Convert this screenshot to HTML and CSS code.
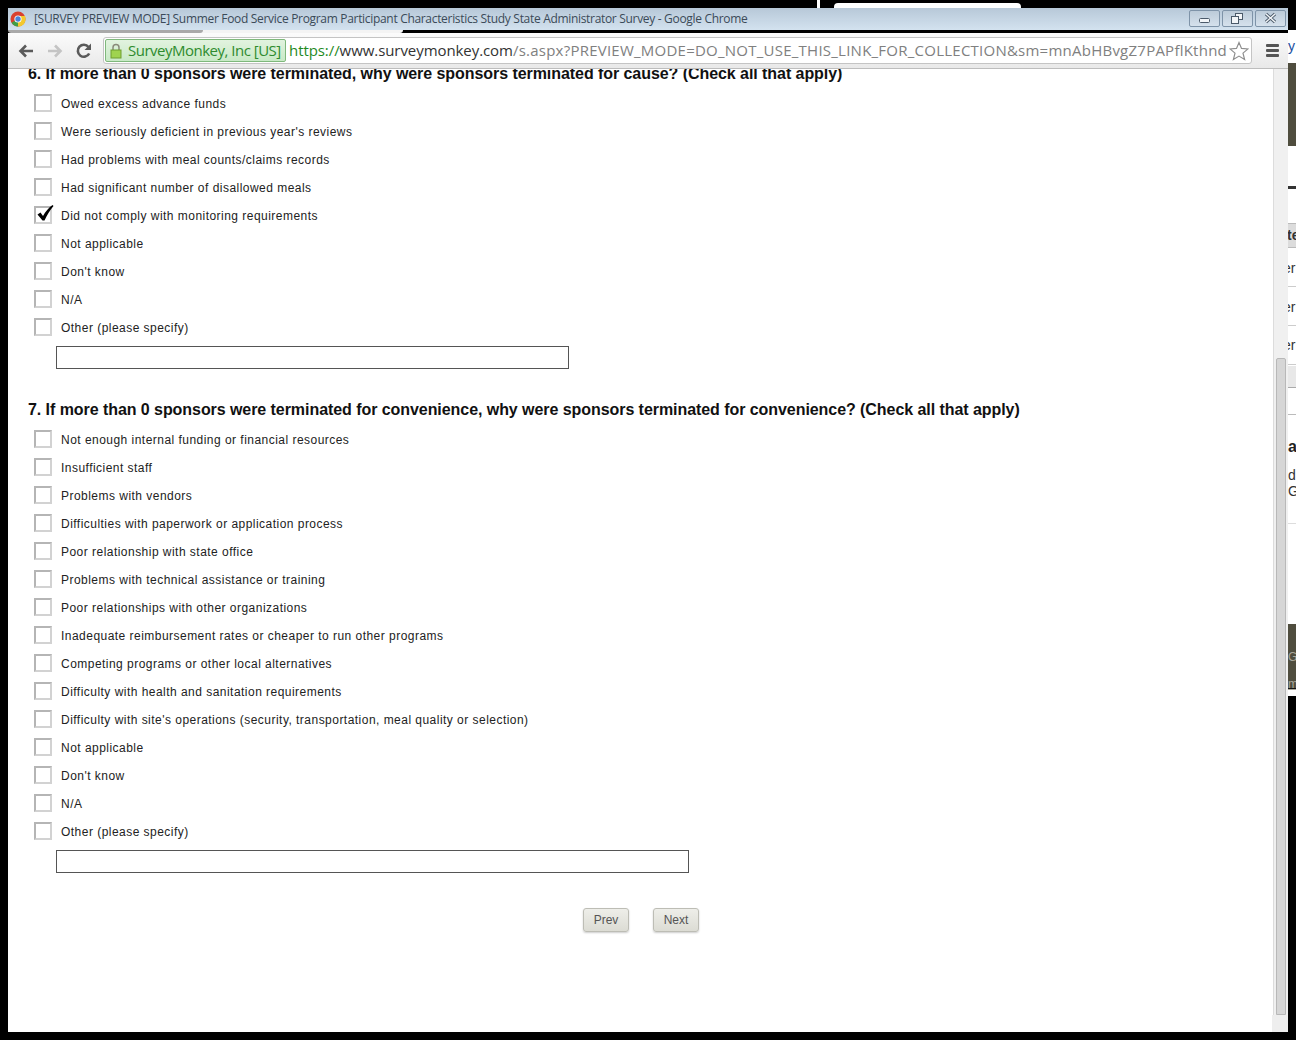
FILE: index.html
```html
<!DOCTYPE html>
<html lang="en">
<head>
<meta charset="utf-8">
<title>Survey preview</title>
<link rel="stylesheet" href="styles.css">
</head>
<body>
<div class="desktop">
  <div class="bg-tab"></div>
  <div class="bg-line"></div>
  <div class="sliver">
    <div class="s-top">y</div>
    <div class="s-dark s-dark-a"></div>
    <div class="s-rule-thick"></div>
    <div class="s-head">te</div>
    <div class="s-row s-r1">er</div>
    <div class="s-row s-r2">er</div>
    <div class="s-row s-r3">er</div>
    <div class="s-grey"></div>
    <div class="s-blank"></div>
    <div class="s-text"><b>a</b><span>d</span><span>G</span></div>
    <div class="s-dark s-dark-b"><span>G</span><u>m</u></div>
  </div>
  <div class="window">
    <div class="titlebar">
      <svg class="chrome-logo" viewBox="0 0 16 16" width="16" height="16"><circle cx="8" cy="8" r="7.5" fill="#d9412f"/><path d="M8 8 1.500 11.800A7.500 7.500 0 0 0 8 15.500L11 9z" fill="#3f9e46"/><path d="M8 8v7.500A7.500 7.500 0 0 0 15 5H8z" fill="#f3c92f"/><circle cx="8" cy="8" r="3.600" fill="#fff"/><circle cx="8" cy="8" r="2.700" fill="#4a82d8"/></svg>
      <span class="title">[SURVEY PREVIEW MODE] Summer Food Service Program Participant Characteristics Study State Administrator Survey - Google Chrome</span>
      <div class="winbtns">
        <div class="winbtn"><svg viewBox="0 0 31 17" width="31" height="17"><rect x="10.500" y="8.500" width="10" height="4" rx="1" fill="#f2f5f8" stroke="#4b5a6a"/></svg></div>
        <div class="winbtn"><svg viewBox="0 0 31 17" width="31" height="17"><rect x="13.500" y="3.500" width="7" height="6" fill="#f2f5f8" stroke="#4b5a6a"/><rect x="9.500" y="6.500" width="7" height="7" fill="#f2f5f8" stroke="#4b5a6a"/></svg></div>
        <div class="winbtn"><svg viewBox="0 0 31 17" width="31" height="17"><path d="M11 4 20 12M20 4 11 12" stroke="#4b5a6a" stroke-width="3.200"/><path d="M11 4 20 12M20 4 11 12" stroke="#f2f5f8" stroke-width="1.400"/></svg></div>
      </div>
    </div>
    <div class="tabstrip"><div class="tab-edge"></div><div class="tab-light"></div></div>
    <div class="toolbar">
      <svg class="nav" viewBox="0 0 18 18" width="18" height="18"><path d="M16 9H4M9 3.500 3.500 9 9 14.500" fill="none" stroke="#5a5a5a" stroke-width="2.600"/></svg>
      <svg class="nav" viewBox="0 0 18 18" width="18" height="18"><path d="M2 9h12M9 3.500 14.500 9 9 14.500" fill="none" stroke="#c4c4c4" stroke-width="2.600"/></svg>
      <svg class="nav" viewBox="0 0 18 18" width="18" height="18"><path d="M14.200 11.500A6 6 0 1 1 13.500 5" fill="none" stroke="#5a5a5a" stroke-width="2.600"/><path d="M16 1.500V8H9.500z" fill="#5a5a5a"/></svg>
      <div class="omnibox">
        <div class="ev">
          <svg viewBox="0 0 12 16" width="12" height="16"><path d="M3 7V4.500a3 3 0 0 1 6 0V7" fill="none" stroke="#8a8a7a" stroke-width="1.500"/><rect x="1" y="7" width="10" height="8" fill="#9fd34f" stroke="#6f9d30"/></svg>
          <span>SurveyMonkey, Inc [US]</span>
        </div>
        <div class="url"><span class="scheme">https://</span><span class="host">www.surveymonkey.com</span><span class="path">/s.aspx?PREVIEW_MODE=DO_NOT_USE_THIS_LINK_FOR_COLLECTION&amp;sm=mnAbHBvgZ7PAPflKthndIw</span></div>
        <svg class="star" viewBox="0 0 20 20" width="20" height="20"><path d="M10 1.500 12.500 7.400 19 7.900 14 12.100 15.600 18.500 10 15.100 4.400 18.500 6 12.100 1 7.900 7.500 7.400z" fill="#fff" stroke="#8f8f8f" stroke-width="1.200"/></svg>
      </div>
      <div class="menu"><i></i><i></i><i></i></div>
    </div>
    <div class="viewport">
      <main class="page">
        <section class="question q6">
          <h2>6. If more than 0 sponsors were terminated, why were sponsors terminated for cause? (Check all that apply)</h2>
          <ul class="options">
            <li><span class="box"></span>Owed excess advance funds</li>
            <li><span class="box"></span>Were seriously deficient in previous year's reviews</li>
            <li><span class="box"></span>Had problems with meal counts/claims records</li>
            <li><span class="box"></span>Had significant number of disallowed meals</li>
            <li><span class="box"><svg class="tick" viewBox="0 0 22 22" width="22" height="22"><path d="M3.500 12.500 6.500 10.500 9 14C11.500 9.500 14.500 6 18.500 3L19.500 4C16 8 13 13 10.500 18.500H8.500z" fill="#000"/></svg></span>Did not comply with monitoring requirements</li>
            <li><span class="box"></span>Not applicable</li>
            <li><span class="box"></span>Don't know</li>
            <li><span class="box"></span>N/A</li>
            <li><span class="box"></span>Other (please specify)</li>
          </ul>
          <div class="textfield tf6"></div>
        </section>
        <section class="question q7">
          <h2>7. If more than 0 sponsors were terminated for convenience, why were sponsors terminated for convenience? (Check all that apply)</h2>
          <ul class="options">
            <li><span class="box"></span>Not enough internal funding or financial resources</li>
            <li><span class="box"></span>Insufficient staff</li>
            <li><span class="box"></span>Problems with vendors</li>
            <li><span class="box"></span>Difficulties with paperwork or application process</li>
            <li><span class="box"></span>Poor relationship with state office</li>
            <li><span class="box"></span>Problems with technical assistance or training</li>
            <li><span class="box"></span>Poor relationships with other organizations</li>
            <li><span class="box"></span>Inadequate reimbursement rates or cheaper to run other programs</li>
            <li><span class="box"></span>Competing programs or other local alternatives</li>
            <li><span class="box"></span>Difficulty with health and sanitation requirements</li>
            <li><span class="box"></span>Difficulty with site's operations (security, transportation, meal quality or selection)</li>
            <li><span class="box"></span>Not applicable</li>
            <li><span class="box"></span>Don't know</li>
            <li><span class="box"></span>N/A</li>
            <li><span class="box"></span>Other (please specify)</li>
          </ul>
          <div class="textfield tf7"></div>
        </section>
        <div class="buttons">
          <button class="btn" type="button">Prev</button>
          <button class="btn" type="button">Next</button>
        </div>
      </main>
      <div class="scrollbar">
        <div class="thumb"></div>
        <div class="corner"></div>
      </div>
    </div>
  </div>
</div>
</body>
</html>
```
FILE: styles.css
```css
* { box-sizing: border-box; }
html, body { margin: 0; padding: 0; background: #000; }
body { font-family: "Liberation Sans", Arial, sans-serif; overflow: hidden; }
.desktop { position: relative; width: 1296px; height: 1040px; background: #000; overflow: hidden; }
.bg-tab { position: absolute; left: 834px; top: 3px; width: 187px; height: 6px; background: #fff; border-radius: 4px 4px 0 0; }
.bg-line { position: absolute; left: 817px; top: 0; width: 3px; height: 9px; background: #fff; }

.sliver { position: absolute; left: 1288px; top: 30px; width: 8px; height: 666px; background: #fff; overflow: hidden; font-size: 14px; color: #333; }
.sliver > div { position: absolute; left: 0; width: 8px; }
.s-top { top: 0; height: 33px; padding-top: 6px; color: #1a4f9e; line-height: 20px; }
.s-dark { background: #4f4d3e; color: #a9a79b; }
.s-dark-a { top: 33px; height: 83px; }
.s-dark-b { top: 594px; height: 66px; font-size: 12px; line-height: 14px; padding-top: 26px; border-bottom: 2px solid #111; }
.s-dark-b span, .s-dark-b u { display: block; white-space: nowrap; }
.s-dark-b u { margin-top: 13px; }
.s-rule-thick { top: 156px; height: 3px; background: #333; }
.s-head { top: 193px; height: 25px; background: #dcdcdc; border-top: 1px solid #bbb; border-bottom: 1px solid #bbb; line-height: 23px; font-weight: bold; text-indent: -1px; white-space: nowrap; }
.s-row { height: 39px; line-height: 38px; text-indent: -5px; border-bottom: 1px solid #ccc; white-space: nowrap; }
.s-r1 { top: 218px; line-height: 40px; }
.s-r2 { top: 257px; line-height: 40px; }
.s-r3 { top: 296px; }
.s-grey { top: 336px; height: 22px; background: #e8e8e8; border-bottom: 1px solid #aaa; }
.s-blank { top: 384px; height: 1px; background: #bbb; }
.s-text { top: 407px; height: 87px; border-bottom: 1px solid #ddd; }
.s-text b { display: block; font-size: 16px; line-height: 20px; color: #222; }
.s-text span { display: block; font-size: 14px; line-height: 16px; color: #333; }
.s-text span:first-of-type { margin-top: 10px; }

.window { position: absolute; left: 8px; top: 8px; width: 1280px; height: 1024px; display: flex; flex-direction: column; background: #fff; }
.titlebar { height: 22px; flex: none; display: flex; align-items: center; padding-left: 2px; background: linear-gradient(#b7c8d8, #d3e2ef); position: relative; }
.chrome-logo { flex: none; margin-top: -1px; }
.title { margin: -2px 0 0 8px; font-family: "Open Sans", sans-serif; font-size: 12px; letter-spacing: -0.315px; color: #3b4a58; white-space: nowrap; }
.winbtns { position: absolute; right: 2px; top: 2px; display: flex; gap: 2px; }
.winbtn { width: 31px; height: 17px; border: 1px solid #7e93a8; border-radius: 2px; background: linear-gradient(#bccbd9, #d5e1ec); display: flex; align-items: center; justify-content: center; }
.winbtn svg { margin: -1px; flex: none; }
.tabstrip { height: 3px; flex: none; background: #000; position: relative; }
.tab-edge { position: absolute; left: 0; top: 0; width: 195px; height: 3px; background: #a9a9a9; border-radius: 0 0 3px 3px; z-index: 1; }
.tab-light { position: absolute; left: 190px; top: 0; width: 205px; height: 3px; background: #f4f4f4; border-radius: 0 0 3px 0; }
.toolbar { height: 36px; flex: none; display: flex; align-items: center; background: linear-gradient(#fbfbfb, #e9e9e9); border-bottom: 1px solid #bdbdbd; position: relative; z-index: 2; padding-left: 9px; }
.nav { flex: none; margin-right: 11px; }
.omnibox { flex: none; width: 1149px; height: 27px; margin-left: -1px; background: #fff; border: 1px solid #c4c4c4; border-radius: 3px; display: flex; align-items: center; overflow: hidden; position: relative; }
.ev { flex: none; height: 23px; margin-left: 1px; width: 181px; background: linear-gradient(#e2f3df, #c8e9c6); border: 1px solid #7fb87c; border-radius: 2px; display: flex; align-items: center; padding-left: 4px; gap: 6px; font-family: "Open Sans", sans-serif; font-size: 15px; line-height: 19px; letter-spacing: -0.5px; color: #2e8b2e; white-space: nowrap; overflow: hidden; }
.ev svg { flex: none; }
.url { margin-left: 3px; width: 938px; flex: none; overflow: hidden; white-space: nowrap; font-family: "Open Sans", sans-serif; font-size: 15px; line-height: 19px; letter-spacing: -0.07px; }
.scheme { color: #1f8a1f; }
.host { color: #333; }
.path { color: #808080; letter-spacing: 0.24px; }
.star { position: absolute; right: 2px; top: 3px; }
.menu { flex: none; margin-left: 14px; width: 13px; display: flex; flex-direction: column; gap: 2px; }
.menu i { display: block; height: 3px; background: #555; border-radius: 1px; }

.viewport { flex: 1; min-height: 0; display: flex; position: relative; overflow: hidden; }
.page { flex: 1; min-width: 0; background: #fff; padding: 0 0 0 20px; }
.question h2 { margin: 0; font-size: 16px; font-weight: bold; line-height: 20px; letter-spacing: -0.06px; color: #111; white-space: nowrap; }
.q6 { margin-top: -5px; }
.q7 { margin-top: 31px; }
.options { list-style: none; margin: 5px 0 0; padding: 0; }
.options li { height: 28px; display: flex; align-items: flex-start; font-size: 12px; line-height: 30px; letter-spacing: 0.47px; color: #222; white-space: nowrap; }
.box { flex: none; width: 18px; height: 18px; margin: 5px 9px 0 6px; border: 2px solid; border-color: #b5b5b5 #d2d2d2 #d2d2d2 #b5b5b5; background: #fff; position: relative; }
.tick { position: absolute; left: -2px; top: -6px; overflow: visible; }
.textfield { height: 23px; margin: 5px 0 0 28px; border: 1px solid #555; background: #fff; }
.tf6 { width: 513px; }
.tf7 { width: 633px; }
.buttons { display: flex; justify-content: center; gap: 24px; margin-top: 35px; width: 1226px; }
.btn { width: 46px; height: 24px; padding: 0; border: 1px solid #bdbdb5; border-radius: 3px; background: linear-gradient(#eeeee9, #dcdcd4); box-shadow: 0 1px 2px rgba(0,0,0,0.2); font: 12px "Liberation Sans", Arial, sans-serif; color: #555; }
.scrollbar { flex: none; width: 15px; background: #f0f0f0; border-left: 1px solid #dcdcdc; position: relative; }
.thumb { position: absolute; left: 2px; right: 2px; top: 289px; bottom: 17px; background: #d6d6d6; border: 1px solid #b8b8b8; border-radius: 2px 2px 0 0; }
.corner { position: absolute; left: -2px; right: 0; bottom: 0; height: 17px; background: #eee; }
```
